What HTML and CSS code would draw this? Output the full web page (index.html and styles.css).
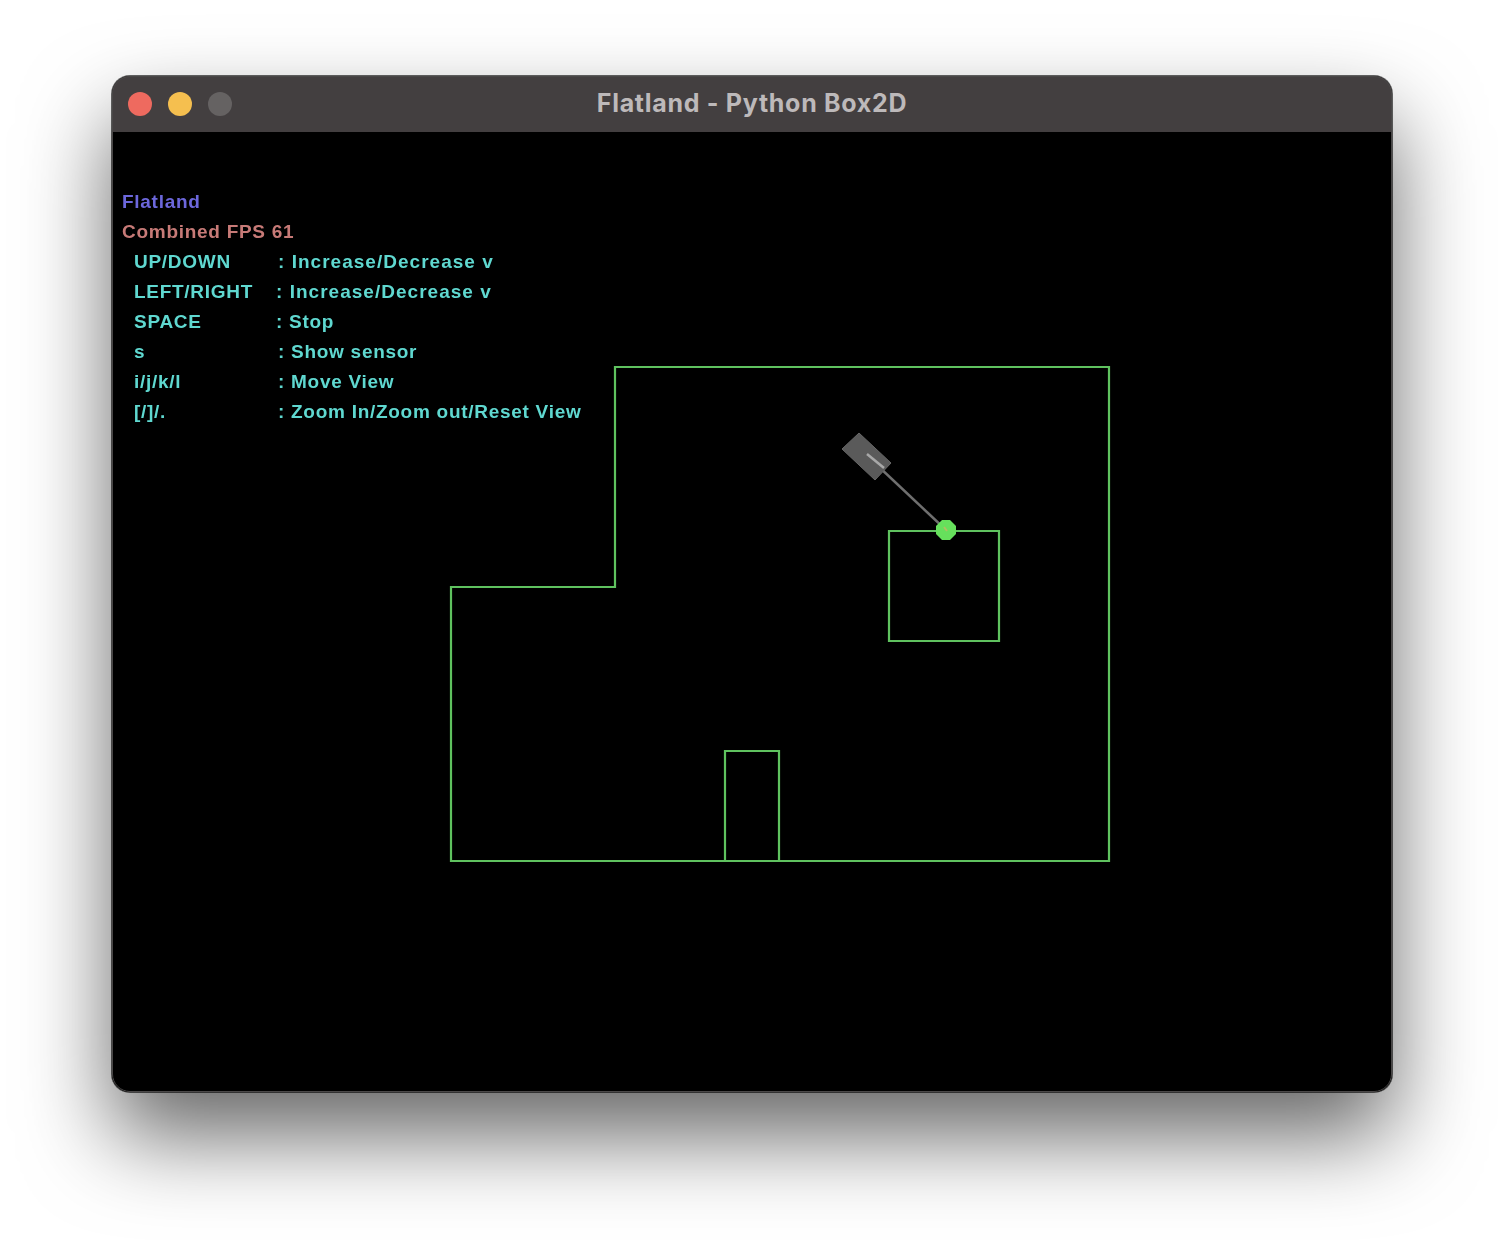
FILE: index.html
```html
<!DOCTYPE html>
<html lang="en">
<head>
    <meta charset="UTF-8">
    <title>Flatland - Python Box2D</title>
    <link rel="stylesheet" href="styles.css">
</head>
<body>
    <div class="window">
        <div class="titlebar">
            <div class="lights">
                <span class="light light-close"></span>
                <span class="light light-min"></span>
                <span class="light light-zoom"></span>
            </div>
            <div class="title">Flatland - Python Box2D</div>
        </div>
        <div class="canvas">
            <svg class="world" viewBox="112 132 1280 960">
                <g class="walls">
                    <path d="M615 367H1109V861H451V587H615Z"/>
                    <path d="M889 531H999V641H889Z"/>
                    <path d="M725 861V751H779V861"/>
                </g>
                <path class="sensor" d="M878 466L946 530"/>
                <path class="body" d="M859 433L842 449L875 480L891 463Z"/>
                <path class="axis" d="M867 454L884 468"/>
                <path class="ball" d="M942 520H950L956 526V534L950 540H942L936 534V526Z"/>
                <path class="ball-axis" d="M944 527L947 531"/>
            </svg>
            <div class="hud">
                <div class="hud-title">Flatland</div>
                <div class="hud-fps">Combined FPS 61</div>
                <div class="hud-row"><span>UP/DOWN</span><span class="val wide">: Increase/Decrease v</span></div>
                <div class="hud-row"><span>LEFT/RIGHT</span><span class="val wide tight">: Increase/Decrease v</span></div>
                <div class="hud-row"><span>SPACE</span><span class="val tight">: Stop</span></div>
                <div class="hud-row"><span>s</span><span class="val">: Show sensor</span></div>
                <div class="hud-row"><span>i/j/k/l</span><span class="val">: Move View</span></div>
                <div class="hud-row"><span>[/]/.</span><span class="val">: Zoom In/Zoom out/Reset View</span></div>
            </div>
        </div>
    </div>
</body>
</html>
```

FILE: styles.css
```css
body {
    margin: 0;
    background-color: #ffffff;
    padding: 76px 112px 148px;
}

.window {
    position: relative;
    height: 1016px;
    border-radius: 18px;
    background-color: #000000;
    box-shadow: 0 44px 88px rgba(0, 0, 0, 0.6), 0 0 0 1px rgba(0, 0, 0, 0.6);
}

.window::after {
    content: "";
    position: absolute;
    inset: 0;
    border: 1px solid #4a4848;
    border-radius: 18px;
    pointer-events: none;
}

.titlebar {
    position: relative;
    height: 56px;
    background-color: #433f40;
    border-radius: 18px 18px 0 0;
    display: flex;
    align-items: center;
    justify-content: center;
}

.lights {
    position: absolute;
    left: 16px;
    top: 16px;
    display: flex;
    gap: 16px;
}

.light {
    width: 24px;
    height: 24px;
    border-radius: 50%;
}

.light-close {
    background-color: #ee6a5f;
}

.light-min {
    background-color: #f5bf4f;
}

.light-zoom {
    background-color: #656262;
}

.title {
    font-family: Inter, sans-serif;
    font-weight: 700;
    font-size: 25px;
    letter-spacing: 0.7px;
    margin-top: -2px;
    color: #bdb9ba;
}

.canvas {
    position: relative;
    height: 960px;
    border-radius: 0 0 18px 18px;
    background-color: #000000;
    overflow: hidden;
}

.world {
    position: absolute;
    left: 0;
    top: 0;
    width: 1280px;
    height: 960px;
    filter: blur(0.35px);
}

.walls path {
    fill: none;
    stroke: #5fc25f;
    stroke-width: 2.2;
}

.sensor {
    stroke: #6f6f6f;
    stroke-width: 2.5;
}

.body {
    fill: #5a5a5a;
    stroke: #666666;
    stroke-width: 1;
}

.axis {
    stroke: #a8a8a8;
    stroke-width: 2.5;
}

.ball {
    fill: #66e05c;
}

.ball-axis {
    stroke: #b0c060;
    stroke-width: 2;
}

.hud {
    position: relative;
    padding: 55px 0 0 10px;
    font-family: "Liberation Sans", Arial, sans-serif;
    font-weight: 700;
    font-size: 19px;
    line-height: 30px;
    letter-spacing: 0.72px;
    filter: blur(0.5px);
}

.hud-title {
    color: #6c67dc;
}

.hud-fps {
    color: #c77a77;
}

.hud-row {
    display: flex;
    padding-left: 12px;
    color: #5fd8d0;
}

.hud-row span:first-child {
    width: 144px;
}

.val.wide {
    letter-spacing: 1.02px;
}

.val.tight {
    margin-left: -2px;
}
```
